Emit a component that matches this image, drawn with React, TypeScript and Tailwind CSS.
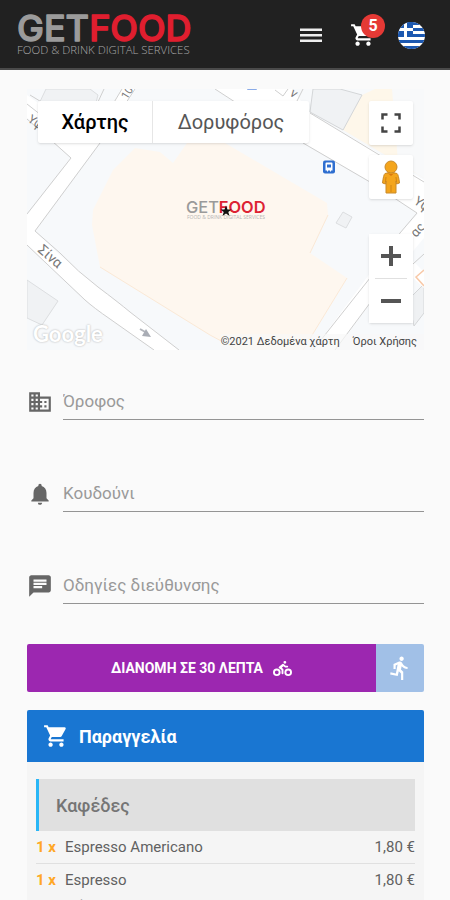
import { useState } from 'react';
import { FaBiking } from 'react-icons/fa';
import { MdChat, MdDirectionsRun, MdDomain, MdNotifications, MdShoppingCart } from 'react-icons/md';

interface OrderItem {
    id: number;
    quantity: number;
    name: string;
    note?: string;
    price: string;
}

const items: OrderItem[] = [
    { id: 1, quantity: 1, name: 'Espresso Americano', price: '1,80 €' },
    { id: 2, quantity: 1, name: 'Espresso', note: 'Μέτριος', price: '1,80 €' },
];

const fields = [
    { id: 'floor', label: 'Όροφος', Icon: MdDomain },
    { id: 'bell', label: 'Κουδούνι', Icon: MdNotifications },
    { id: 'directions', label: 'Οδηγίες διεύθυνσης', Icon: MdChat },
];

function Logo() {
    return (
        <svg viewBox="0 0 180 44" className="h-11 w-[180px]" role="img" aria-label="GetFood">
            <text
                x="0"
                y="28"
                fontFamily="Inter, sans-serif"
                fontSize="36"
                fontWeight="500"
                fill="#9b9b9b"
                stroke="#9b9b9b"
                strokeWidth="1.3"
                strokeLinejoin="round"
            >
                GET
                <tspan fill="#e01e2f" stroke="#e01e2f">FOOD</tspan>
            </text>
            <text x="0" y="41" fontFamily="Open Sans, sans-serif" fontSize="11.400" fontWeight="300" fill="#a8a8a8">
                FOOD &amp; DRINK DIGITAL SERVICES
            </text>
        </svg>
    );
}

function GreekFlag() {
    return (
        <svg viewBox="0 0 27 27" className="size-[27px]" aria-hidden="true">
            <defs>
                <clipPath id="flag">
                    <circle cx="13.5" cy="13.5" r="13.5" />
                </clipPath>
            </defs>
            <g clipPath="url(#flag)">
                <rect width="27" height="27" fill="#fff" />
                <path d="M0 0H27V3H0zM0 6H27V9H0zM0 12H27V15H0zM0 18H27V21H0zM0 24H27V27H0z" fill="#1c58b0" />
                <rect width="15" height="15" fill="#1c58b0" />
                <path d="M6 0H9V15H6zM0 6H15V9H0z" fill="#fff" />
            </g>
        </svg>
    );
}

function Header() {
    return (
        <header className="flex h-[70px] items-center justify-between border-b-2 border-[#4a4a4a] bg-[#212121] pt-[2px] pr-[25px] pl-[17px]">
            <a href="#">
                <Logo />
            </a>
            <nav className="flex items-center gap-[22px] text-white">
                <button type="button" aria-label="Μενού" className="mr-[6px]">
                    <svg viewBox="0 0 22 16" className="h-4 w-[22px]" fill="#eee" aria-hidden="true">
                        <path d="M0 1.500H22V4H0zM0 7H22V9.500H0zM0 12.500H22V15H0z" />
                    </svg>
                </button>
                <button type="button" aria-label="Καλάθι" className="relative">
                    <MdShoppingCart className="size-[26px]" />
                    <span className="absolute -top-[8px] left-[11px] flex size-6 items-center justify-center rounded-full bg-[#e53935] text-base font-bold">
                        5
                    </span>
                </button>
                <button type="button" aria-label="Ελληνικά">
                    <GreekFlag />
                </button>
            </nav>
        </header>
    );
}

function MapDrawing() {
    return (
        <svg viewBox="27 89 397 261" preserveAspectRatio="xMidYMid slice" className="absolute inset-0 h-full w-full" aria-hidden="true">
            <rect x="27" y="89" width="397" height="261" fill="#f7f9fb" />

            {/* buildings */}
            <g fill="#f0f2f4" stroke="#dcdee0">
                <path d="M46 89L90 89L98 95L94 110L36 110z" />
                <path d="M27 280L58 301L42 325L27 318z" />
                <path d="M343 212L352 217L346 228L336 223z" />
            </g>
            <path d="M135 148L160 152L173 163L187 143L225 143L327 203L328 215L310 253L347 278L303 350H238L210 335L100 267L92 225L93 210L113 170z" fill="#fef7ef" />
            <path d="M100 267L210 335L238 350M347 278L303 350M310 253L328 215" fill="none" stroke="#fbe9d6" />
            <path d="M362 95L375 89H424V178L343 130z" fill="#fef7ea" />
            <path d="M392 89H424V178L398 162z" fill="#f8f9fa" />
            <path d="M313 89L340 89L362 95L343 130L310 112z" fill="#f0f2f4" stroke="#d4d6d8" />
            <path d="M408 300L424 284V313L414 326z" fill="#eff1f3" stroke="#d4d6d8" />

            {/* roads */}
            <g fill="#fff">
                <path d="M27 215L71 158L27 118V95L90 140L122 89H136L100 143L35 231L60 255L98 287L130 312L179 350H154L93 307L27 245z" />
                <path d="M215 89H292L310 113L424 180V218L370 182L233 101z" />
                <path d="M424 207L400 233L313 350H336L370 303L424 238z" />
                <path d="M396 262L424 288V272L404 252z" />
            </g>
            <g fill="none" stroke="#cfcfcf">
                <path d="M27 214L71 158L52 141M27 119L36 127" />
                <path d="M135 89L100 143L35 231L60 253Q78 272 98 287T130 312L179 350" />
                <path d="M27 245L85 300Q94 308 110 319L154 350" />
                <path d="M27 104L60 130M30 95L48 106M122 89L113 104M104 89L97 104" />
                <path d="M215 89L238 104M275 90L283 96L288 89M303 89L297 101" />
                <path d="M310 113L424 182M303 143L370 182L417 213L400 233" />
                <path d="M400 233L370 278L313 350M370 303L335 350M424 254L370 303" />
            </g>
            <path d="M424 270L416 277L424 286" fill="none" stroke="#f8c9a8" strokeWidth="1.5" />
            <path d="M140 329L147 333" stroke="#b4b7bd" strokeWidth="2" />
            <path d="M146 329L151 337L142 336z" fill="#a9adb5" />
            <rect x="247" y="87" width="10" height="3" rx="1" fill="#8aabe8" />

            <g fill="#777" fontFamily="Roboto, sans-serif" fontSize="13">
                <text transform="translate(37 251) rotate(41)" fontSize="14">Σίνα</text>
                <text transform="translate(127 100) rotate(-58)" fontSize="11">10</text>
                <text transform="translate(27 121) rotate(35)" fontSize="12">Υψ</text>
                <text transform="translate(289 95) rotate(35)">ν</text>
                <text transform="translate(413 203) rotate(35)">Υψ</text>
                <text transform="translate(416 238) rotate(-48)">ας</text>
            </g>

            {/* bus stop */}
            <rect x="323" y="160.500" width="12" height="13" rx="2" fill="#2f6fd0" />
            <path d="M325.500 163.500Q325.500 162.500 326.500 162.500H331.500Q332.500 162.500 332.500 163.500V170.500H331V171.500H330V170.500H328V171.500H327V170.500H325.500z" fill="#fff" />
            <rect x="327" y="164.500" width="4" height="3" fill="#2f6fd0" />

            {/* shop marker */}
            <text x="186" y="213" fontFamily="Inter, sans-serif" fontSize="16.400" fontWeight="500" fill="#9a9a9a">
                GET<tspan fill="#dd2233" fontWeight="600">FOOD</tspan>
            </text>
            <text x="187" y="219" fontFamily="Open Sans, sans-serif" fontSize="5" fill="#b5b5b5">
                FOOD &amp; DRINK DIGITAL SERVICES
            </text>
            <path d="M226 205.500L227.500 209.500H231.500L228.300 212L229.500 216L226 213.600L222.500 216L223.700 212L220.500 209.500H224.500z" fill="#111" />
        </svg>
    );
}

function Pegman() {
    return (
        <svg viewBox="0 0 20 34" className="h-[34px] w-5" aria-hidden="true">
            <path
                d="M4 13.500Q10 11 16 13.500Q17.500 14.500 18.500 23L15.500 24L15 21V33H5V21L4.500 24L1.500 23Q2.500 14.500 4 13.500z"
                fill="#f4a51c"
                stroke="#c98a2a"
            />
            <path d="M10 25V32M5 17L4.500 22M15 17L15.500 22" stroke="#d08514" />
            <circle cx="10" cy="7" r="6" fill="#f4a51c" stroke="#c98a2a" />
            <path d="M6 12.500Q10 15.500 14 12.500L10 16z" fill="#d9780d" />
        </svg>
    );
}

function DeliveryMap() {
    const [mapType, setMapType] = useState('map');
    const control = 'flex h-11 w-11 items-center justify-center bg-white';

    return (
        <section className="relative h-[261px] overflow-hidden">
            <MapDrawing />

            <div className="absolute top-3 left-[11px] flex h-[42px] rounded-xs bg-white text-[20px] shadow">
                <button
                    type="button"
                    onClick={() => setMapType('map')}
                    className={`w-[115px] border-r border-[#e6e6e6] ${mapType === 'map' ? 'font-medium text-black' : 'text-[#565656]'}`}
                >
                    Χάρτης
                </button>
                <button
                    type="button"
                    onClick={() => setMapType('satellite')}
                    className={`w-[156px] ${mapType === 'satellite' ? 'font-medium text-black' : 'text-[#565656]'}`}
                >
                    Δορυφόρος
                </button>
            </div>

            <div className="absolute top-3 right-[11px] flex flex-col">
                <button type="button" aria-label="Πλήρης οθόνη" className={`${control} rounded-xs shadow`}>
                    <svg viewBox="0 0 20 20" className="size-5" fill="none" stroke="#444" strokeWidth="2.5">
                        <path d="M1.500 6.500V1.500H6.500M13.500 1.500H18.500V6.500M18.500 13.500V18.500H13.500M6.500 18.500H1.500V13.500" />
                    </svg>
                </button>
                <button type="button" aria-label="Street View" className={`${control} mt-[10px] rounded-xs shadow`}>
                    <Pegman />
                </button>
                <div className="mt-[35px] flex flex-col items-center rounded-xs bg-white shadow">
                    <button type="button" aria-label="Μεγέθυνση" className={control}>
                        <svg viewBox="0 0 20 20" className="size-5" stroke="#555" strokeWidth="4">
                            <path d="M0 10H20M10 0V20" />
                        </svg>
                    </button>
                    <span className="h-px w-8 bg-[#e0e0e0]" />
                    <button type="button" aria-label="Σμίκρυνση" className={control}>
                        <svg viewBox="0 0 20 20" className="size-5" stroke="#555" strokeWidth="4">
                            <path d="M0 10H20" />
                        </svg>
                    </button>
                </div>
            </div>

            <span className="absolute bottom-0 left-[6px] font-['Lato'] text-[22px] leading-8 font-bold text-white [text-shadow:0_0_2px_#aaa]">
                Google
            </span>
            <div className="absolute right-0 bottom-0 flex gap-[13px] bg-[#f8f8f8]/70 pr-[7px] text-[11px] leading-4 text-[#444]">
                <span>©2021 Δεδομένα χάρτη</span>
                <a href="#">Όροι Χρήσης</a>
            </div>
        </section>
    );
}

export default function App() {
    const [values, setValues] = useState<Record<string, string>>({});

    return (
        <div className="min-h-screen bg-[#fafafa] font-['Roboto',sans-serif] text-[#616161]">
            <Header />

            <main className="pt-[19px] pr-[26px] pl-[27px]">
                <DeliveryMap />

                <form className="mt-[34px] flex flex-col gap-14">
                    {fields.map(({ id, label, Icon }) => (
                        <div key={id} className="flex h-9 items-center">
                            <label htmlFor={id} aria-label={label} className="w-9 shrink-0">
                                <Icon className="size-[26px] text-[#666]" />
                            </label>
                            <input
                                id={id}
                                type="text"
                                placeholder={label}
                                value={values[id] || ''}
                                onChange={(e) => setValues({ ...values, [id]: e.target.value })}
                                className="h-full min-w-0 flex-1 border-b border-[#949494] pb-px text-[17px] outline-none placeholder:text-[#999]"
                            />
                        </div>
                    ))}
                </form>

                <div className="mt-10 flex h-12 overflow-hidden rounded-xs text-white">
                    <button type="button" className="flex flex-1 items-center justify-center gap-[10px] bg-[#9c27b0] text-[14px] font-bold">
                        ΔΙΑΝΟΜΗ ΣΕ 30 ΛΕΠΤΑ
                        <FaBiking className="size-[19px]" />
                    </button>
                    <button type="button" aria-label="Παραλαβή" className="flex w-12 items-center justify-center bg-[#a1c0e7]">
                        <MdDirectionsRun className="size-[26px]" />
                    </button>
                </div>

                <section className="mt-[18px] bg-[#f5f5f5]">
                    <h2 className="flex h-[52px] items-center gap-[10px] rounded-t-xs bg-[#1976d2] pl-4 text-[18px] font-bold text-white">
                        <MdShoppingCart className="size-[26px]" />
                        Παραγγελία
                    </h2>

                    <div className="px-[9px] pt-[17px]">
                        <h3 className="flex h-[52px] items-center border-l-3 border-[#29b6f6] bg-[#e0e0e0] pl-[17px] text-[18px] font-medium text-[#757575]">
                            Καφέδες
                        </h3>
                        <ul className="divide-y divide-[#e0e0e0] text-[15px]">
                            {items.map((item) => (
                                <li key={item.id} className="py-1">
                                    <div className="flex leading-6">
                                        <span className="w-[29px] font-bold text-[#ffa726]">{item.quantity} x</span>
                                        <span className="flex-1">{item.name}</span>
                                        <span>{item.price}</span>
                                    </div>
                                    {item.note && <p className="pt-1 pl-[29px] text-sm">{item.note}</p>}
                                </li>
                            ))}
                        </ul>
                    </div>
                </section>
            </main>
        </div>
    );
}
